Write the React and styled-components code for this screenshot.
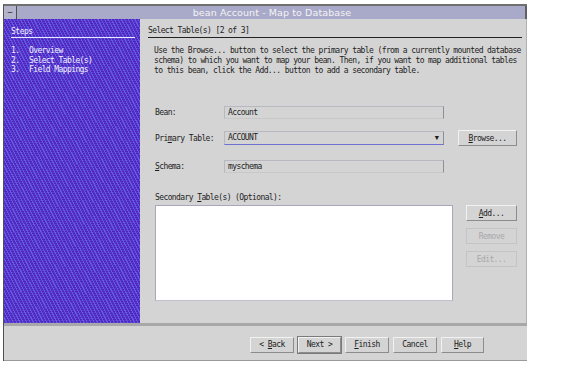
import styled, { createGlobalStyle } from "styled-components";

const Global = createGlobalStyle`
    body {
        margin: 0;
        background: #ffffff;
        font-family: "DejaVu Sans Mono", monospace;
    }
`

function App() {
    return (
        <>
            <Global />
            <Window>
                <TitleBar>
                    <MenuBox>−</MenuBox>
                    <Title>bean Account - Map to Database</Title>
                </TitleBar>
                <Body>
                    <Steps>
                        <StepsHead>Steps</StepsHead>
                        <StepList>
                            <Step><Num>1.</Num>Overview</Step>
                            <Step><Num>2.</Num>Select Table(s)</Step>
                            <Step><Num>3.</Num>Field Mappings</Step>
                        </StepList>
                    </Steps>
                    <Content>
                        <Header>Select Table(s) [2 of 3]</Header>
                        <Intro>
                            Use the Browse... button to select the primary table (from a currently mounted database<br />
                            schema) to which you want to map your bean. Then, if you want to map additional tables<br />
                            to this bean, click the Add... button to add a secondary table.
                        </Intro>
                        <Row $top={30}>
                            <Label>Bean:</Label>
                            <Field>Account</Field>
                        </Row>
                        <Row $top={11}>
                            <Label>Pri<u>m</u>ary Table:</Label>
                            <Combo>ACCOUNT<Arrow>▼</Arrow></Combo>
                            <Button $w={59}><u>B</u>rowse...</Button>
                        </Row>
                        <Row $top={14}>
                            <Label><u>S</u>chema:</Label>
                            <Field>myschema</Field>
                        </Row>
                        <ListLabel>Secondary <u>T</u>able(s) (Optional):</ListLabel>
                        <ListRow>
                            <List />
                            <SideButtons>
                                <Button $w={51}><u>A</u>dd...</Button>
                                <Button $w={51} $off>Remove</Button>
                                <Button $w={51} $off>Edit...</Button>
                            </SideButtons>
                        </ListRow>
                    </Content>
                </Body>
                <Footer>
                    <Button $w={44}>&lt;&nbsp;<u>B</u>ack</Button>
                    <Button $w={43} $default>Next&nbsp;&gt;</Button>
                    <Button $w={44}><u>F</u>inish</Button>
                    <Button $w={44}>Cancel</Button>
                    <Button $w={43}><u>H</u>elp</Button>
                </Footer>
            </Window>
        </>
    )
}

const Window = styled.div`
    margin: 4px 0 0 3px;
    width: 524px;
    height: 357px;
    display: flex;
    flex-direction: column;
    border-top: 2px solid #707070;
    border-left: 1px solid #505050;
    box-sizing: border-box;
`

const TitleBar = styled.div`
    height: 13px;
    display: flex;
    align-items: center;
    background-color: #a9a9c9;
    border-right: 2px solid #606060;
`

const MenuBox = styled.div`
    width: 13px;
    height: 13px;
    box-sizing: border-box;
    border-right: 1px solid #505050;
    color: #303030;
    font-size: 9px;
    line-height: 12px;
    text-align: center;
    background-color: #b4b4cc;
`

const Title = styled.div`
    flex: 1;
    text-align: center;
    padding-left: 2px;
    color: #f4f4f4;
    font-family: "DejaVu Sans", sans-serif;
    font-size: 9.5px;
    letter-spacing: 0.1px;
`

const Body = styled.div`
    height: 304px;
    display: flex;
`

const Steps = styled.div`
    width: 136px;
    padding: 8px 5px 0 7px;
    box-sizing: border-box;
    background-color: #5022c0;
    background-image:
        repeating-linear-gradient(63deg, transparent 0 2px, rgba(105, 105, 230, 0.75) 2px 3px),
        repeating-linear-gradient(0deg, rgba(100, 95, 225, 0.35) 0 1px, transparent 1px 2px);
    color: #f0f0ff;
`

const StepsHead = styled.div`
    font-size: 8px;
    letter-spacing: -0.5px;
    padding-bottom: 1px;
    border-bottom: 1px solid #e8e8ff;
`

const StepList = styled.div`
    margin-top: 8px;
    display: flex;
    flex-direction: column;
`

const Step = styled.div`
    font-size: 8px;
    line-height: 9.5px;
    letter-spacing: -0.6px;
    display: flex;
`

const Num = styled.span`
    width: 18px;
`

const Content = styled.div`
    flex: 1;
    background-color: #d4d4d4;
    padding: 7px 4px 0 8px;
    color: #1c1c1c;
    font-size: 8px;
    letter-spacing: -0.6px;
    border-right: 1px solid #b0b0b0;
`

const Header = styled.div`
    padding-bottom: 2px;
    border-bottom: 1px solid #222222;
`

const Intro = styled.div`
    margin: 8px 0 0 6px;
    line-height: 10px;
    white-space: nowrap;
`

const Row = styled.div`
    margin: ${p => p.$top}px 0 0 7px;
    display: flex;
    align-items: center;
`

const Label = styled.div`
    width: 69px;
`

const Field = styled.div`
    width: 220px;
    height: 13px;
    box-sizing: border-box;
    padding-left: 3px;
    line-height: 11px;
    border: 1px solid #b8b8c0;
    border-right-color: #909090;
    border-bottom-color: #c8c8c8;
`

const Combo = styled(Field)`
    height: 14px;
    display: flex;
    justify-content: space-between;
    border-bottom: 1px solid #7070d0;
    padding-right: 4px;
`

const Arrow = styled.span`
    font-size: 7px;
    letter-spacing: 0;
    line-height: 12px;
`

const Button = styled.div`
    width: ${p => p.$w}px;
    height: 16px;
    box-sizing: border-box;
    display: flex;
    align-items: center;
    justify-content: center;
    color: ${p => p.$off ? "#a8a8a8" : "#1c1c1c"};
    border: 1px solid ${p => p.$off ? "#c4c4c4" : "#f2f2f2"};
    border-right-color: ${p => p.$off ? "#c4c4c4" : "#8c8c8c"};
    border-bottom-color: ${p => p.$off ? "#c4c4c4" : "#8c8c8c"};
    ${p => p.$default && "outline: 1px solid #7a7a7a;"}
    flex-shrink: 0;
    ${Row} & {
        margin-left: 14px;
    }
`

const ListLabel = styled.div`
    margin: 20px 0 0 7px;
`

const ListRow = styled.div`
    margin: 3px 0 0 7px;
    display: flex;
    align-items: flex-start;
`

const List = styled.div`
    width: 298px;
    height: 96px;
    box-sizing: border-box;
    background: #ffffff;
    border: 1px solid #a8a8b8;
    border-bottom-color: #c0c0d0;
`

const SideButtons = styled.div`
    margin-left: 13px;
    display: flex;
    flex-direction: column;
    gap: 7px;
`

const Footer = styled.div`
    flex: 1;
    display: flex;
    align-items: center;
    justify-content: flex-end;
    gap: 4px;
    padding: 3px 43px 0 0;
    background-color: #d4d4d4;
    border-top: 3px solid #a8a8a8;
    border-bottom: 1px solid #9a9a9a;
    font-size: 8px;
    letter-spacing: -0.6px;
`

export default App
